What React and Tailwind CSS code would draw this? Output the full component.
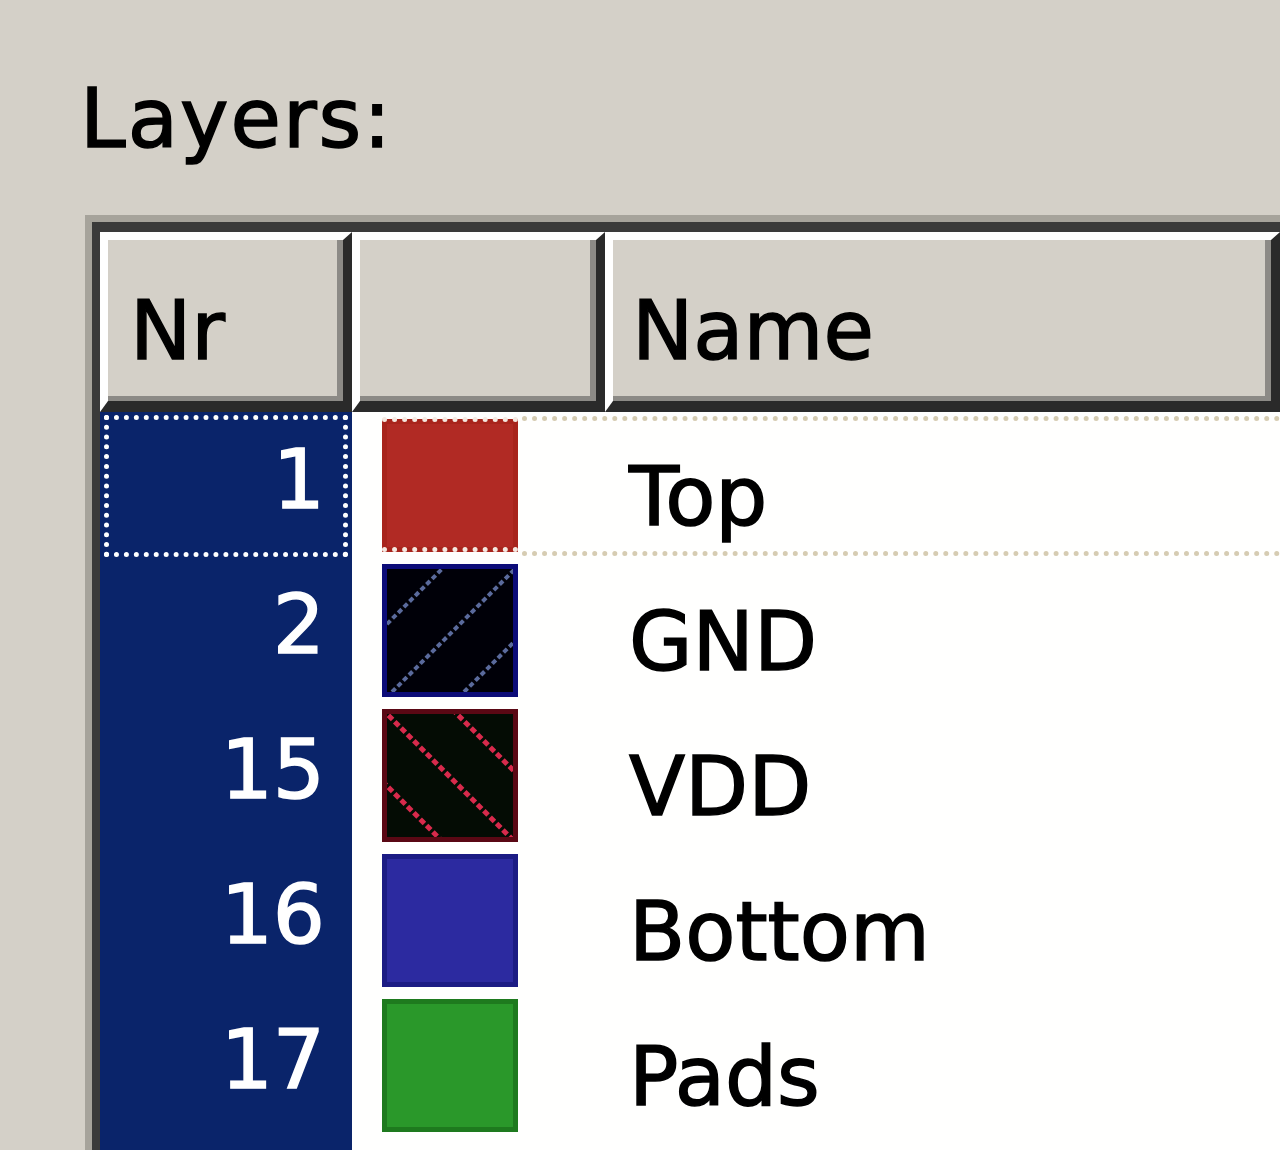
import React from "react";

const layers = [
  { nr: 1, name: "Top", kind: "solid", fill: "#b12a24", edge: "#a8241c" },
  { nr: 2, name: "GND", kind: "slash", fill: "#000008", edge: "#0c0c78", line: "#5a6a9c" },
  { nr: 15, name: "VDD", kind: "backslash", fill: "#040c04", edge: "#5a0814", line: "#d82a4c" },
  { nr: 16, name: "Bottom", kind: "solid", fill: "#2c2aa0", edge: "#1c1c84" },
  { nr: 17, name: "Pads", kind: "solid", fill: "#2a982a", edge: "#1e7a1e" },
];

function Swatch({ layer, focused }) {
  return (
    <div
      className="relative w-[136px] h-[133px] border-[5px]"
      style={{ backgroundColor: layer.fill, borderColor: layer.edge }}
    >
      {layer.kind === "slash" && (
        <svg width="126" height="123" viewBox="5 5 126 123" className="block overflow-hidden">
          {[65, 138, 210].map((s) => (
            <line key={s} x1={s} y1={0} x2={0} y2={s} stroke={layer.line} strokeWidth="4" strokeDasharray="5 3" />
          ))}
        </svg>
      )}
      {layer.kind === "backslash" && (
        <svg width="126" height="123" viewBox="5 5 126 123" className="block overflow-hidden">
          {[-70, 0, 72].map((s) => (
            <line key={s} x1={0} y1={s} x2={140} y2={s + 140} stroke={layer.line} strokeWidth="5" strokeDasharray="6 3" />
          ))}
        </svg>
      )}
      {focused && (
        <div className="absolute -left-[5px] -right-[5px] -top-[7px] -bottom-[5px] border-y-[5px] border-dotted border-[#f4e8e0]" />
      )}
    </div>
  );
}

function HeaderCell({ children, className = "" }) {
  return (
    <div
      className={
        "h-full bg-[#d4d0c8] border-t-[8px] border-l-[8px] border-r-[9px] border-b-[11px] border-t-white border-l-white border-r-[#2a2a2a] border-b-[#2a2a2a] shadow-[inset_-6px_-5px_0_#8c8a86] " +
        className
      }
    >
      {children}
    </div>
  );
}

export default function App() {
  return (
    <div className="w-[1280px] h-[1150px] overflow-hidden bg-[#d4d0c8] font-['DejaVu_Sans',sans-serif] text-[82px] leading-[82px] text-black [-webkit-text-stroke-width:1.5px]">
      {/* Label */}
      <div className="h-[215px] pl-[80px] pt-[78px] tracking-[2px]">Layers:</div>

      {/* List view frame */}
      <div className="ml-[85px] border-t-[7px] border-l-[7px] border-[#a6a39b]">
        <div className="border-t-[10px] border-l-[8px] border-[#3a3a3a] bg-[#fffffe]">
          {/* Header */}
          <div className="flex h-[180px]">
            <HeaderCell className="w-[252px] shrink-0 pl-[22px] pt-[50px]">Nr</HeaderCell>
            <HeaderCell className="w-[253px] shrink-0" />
            <HeaderCell className="flex-1 pl-[19px] pt-[50px]">Name</HeaderCell>
          </div>

          {/* Rows */}
          {layers.map((layer, i) => (
            <div key={layer.nr} className="flex h-[145px]">
              <div className="relative w-[252px] shrink-0 bg-[#0a246a] text-white text-right pr-[27px] pt-[27px]">
                {layer.nr}
                {i === 0 && (
                  <div className="absolute left-[4px] right-[4px] top-[3px] bottom-[0px] border-[5px] border-dotted border-white" />
                )}
              </div>
              <div className="relative flex flex-1">
                <div className="w-[253px] shrink-0 pl-[30px] pt-[7px]">
                  <Swatch layer={layer} focused={i === 0} />
                </div>
                <div className="flex-1 pl-[24px] pt-[44px]">{layer.name}</div>
                {i === 0 && (
                  <div className="absolute left-[170px] right-0 top-[4px] bottom-[1px] border-y-[5px] border-dotted border-[#d6ccb2]" />
                )}
              </div>
            </div>
          ))}
          <div className="flex h-[145px]">
            <div className="w-[252px] shrink-0 bg-[#0a246a]" />
          </div>
        </div>
      </div>
    </div>
  );
}
